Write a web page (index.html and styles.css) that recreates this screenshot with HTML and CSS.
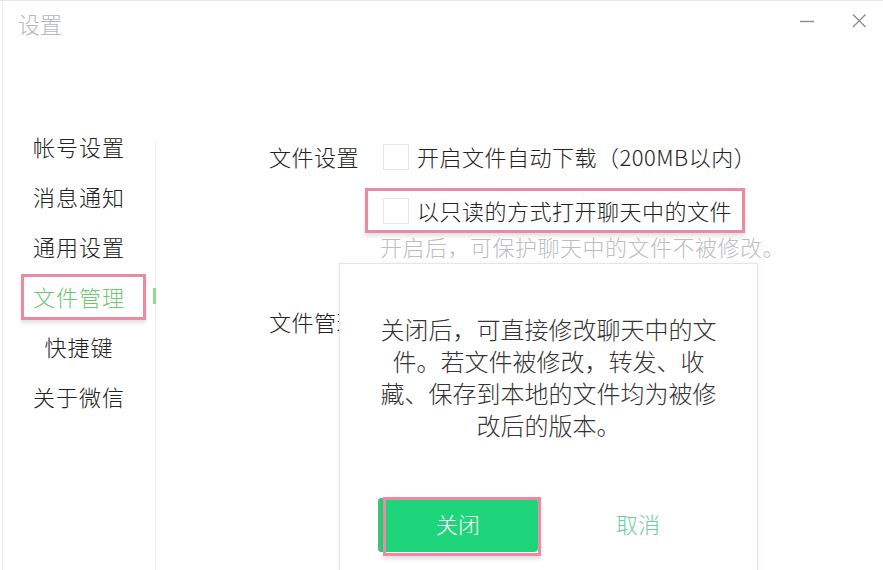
FILE: index.html
```html
<!DOCTYPE html>
<html lang="zh-CN">
<head>
    <meta charset="UTF-8">
    <meta name="viewport" content="width=device-width, initial-scale=1.0">
    <title>设置</title>
    <link rel="stylesheet" href="styles.css">
</head>
<body>

    <div class="window">

        <!-- Title bar -->
        <header class="titlebar">
            <span class="title">设置</span>
            <div class="controls">
                <button class="ctrl" title="最小化">
                    <svg width="16" height="16" viewBox="0 0 16 16"><path d="M1 8.5H15" stroke="#8c8c98" stroke-width="1.4"/></svg>
                </button>
                <button class="ctrl" title="关闭">
                    <svg width="16" height="16" viewBox="0 0 16 16"><path d="M2 1.5L14.5 14M14.5 1.5L2 14" stroke="#8c8c98" stroke-width="1.4"/></svg>
                </button>
            </div>
        </header>

        <div class="body">

            <!-- Side menu -->
            <nav class="nav">
                <div class="nav-item">帐号设置</div>
                <div class="nav-item">消息通知</div>
                <div class="nav-item">通用设置</div>
                <div class="nav-item active">文件管理</div>
                <div class="nav-item">快捷键</div>
                <div class="nav-item">关于微信</div>
            </nav>

            <div class="divider"></div>

            <!-- File settings -->
            <main class="main">
                <div class="row">
                    <span class="label">文件设置</span>
                    <label class="check"><span class="box"></span>开启文件自动下载（200MB以内）</label>
                </div>
                <div class="row">
                    <span class="label"></span>
                    <label class="check marked"><span class="box"></span>以只读的方式打开聊天中的文件</label>
                </div>
                <p class="hint">开启后，可保护聊天中的文件不被修改。</p>
                <div class="row row-manage">
                    <span class="label">文件管理</span>
                </div>
            </main>

            <!-- Confirm dialog -->
            <div class="dialog">
                <p class="dialog-text">关闭后，可直接修改聊天中的文件。若文件被修改，转发、收藏、保存到本地的文件均为被修改后的版本。</p>
                <div class="dialog-actions">
                    <button class="btn btn-primary marked">关闭</button>
                    <button class="btn btn-text">取消</button>
                </div>
            </div>

        </div>
    </div>

</body>
</html>
```

FILE: styles.css
```css
body {
    margin: 0;
    font-family: "Noto Sans CJK SC", "Noto Sans", sans-serif;
    font-weight: 300;
    color: #222;
    background: #fff;
}
.window {
    width: 883px;
    height: 570px;
    overflow: hidden;
    box-sizing: border-box;
    border-top: 1px solid #e6e6ee;
    box-shadow: inset 2px 0 0 #fff, inset 3px 0 0 #efeff3;
}

/* title bar */
.titlebar {
    height: 49px;
    display: flex;
    align-items: center;
    justify-content: space-between;
    padding: 0 16px 0 18px;
}
.title {
    margin-bottom: 6px;
    font-size: 22px;
    color: #b6b6be;
}
.controls {
    align-self: flex-start;
    margin-top: 12px;
    display: flex;
    gap: 36px;
}
.ctrl {
    border: none;
    background: none;
    padding: 0;
    width: 16px;
    height: 16px;
    cursor: pointer;
}
.ctrl svg {
    display: block;
}

/* layout */
.body {
    position: relative;
    display: flex;
    height: 520px;
    padding-top: 71px;
    box-sizing: border-box;
}
.nav {
    width: 155px;
    flex-shrink: 0;
}
.nav-item {
    position: relative;
    height: 50px;
    line-height: 50px;
    padding-left: 3px;
    text-align: center;
    font-size: 22px;
    letter-spacing: 1px;
    color: #222;
    cursor: pointer;
}
.nav-item.active {
    color: #6cc873;
}
.nav-item.active::before {
    content: "";
    position: absolute;
    left: 153px;
    top: 17px;
    width: 3px;
    height: 16px;
    background: #8fdc92;
}
.nav-item.active::after {
    content: "";
    position: absolute;
    left: 21px;
    top: 3px;
    width: 125px;
    height: 46px;
    box-sizing: border-box;
    border: 3px solid #ec8aa4;
    box-shadow: 0 3px 4px rgba(0, 0, 0, 0.12);
}
.divider {
    width: 1px;
    margin-top: 19px;
    background: #f0f0f2;
}

/* settings */
.main {
    flex: 1;
    padding: 10px 0 0 113px;
}
.row {
    display: flex;
    align-items: center;
    height: 50px;
    font-size: 22px;
    letter-spacing: 0.5px;
}
.label {
    width: 114px;
    flex-shrink: 0;
}
.check {
    display: flex;
    align-items: center;
    height: 45px;
}
.box {
    width: 26px;
    height: 26px;
    box-sizing: border-box;
    border: 1px solid #e6e6e6;
    margin: 2px 8px 0 0;
}
.check.marked {
    position: relative;
    margin-left: -18px;
    padding: 0 13px 0 18px;
    margin-top: 8px;
}
.hint {
    margin: 0 0 0 111px;
    line-height: 30px;
    font-size: 22px;
    letter-spacing: 0.5px;
    color: #bdbdc2;
}
.row-manage {
    margin-top: 35px;
}

/* highlight frame */
.marked::after {
    content: "";
    position: absolute;
    inset: 0;
    border: 3px solid #ec8aa4;
    box-shadow: 0 3px 4px rgba(0, 0, 0, 0.12);
}

/* dialog */
.dialog {
    position: absolute;
    left: 339px;
    top: 213px;
    width: 419px;
    height: 330px;
    box-sizing: border-box;
    background: #fff;
    border: 1px solid #e4e4ec;
    box-shadow: 0 0 6px rgba(0, 0, 0, 0.05);
    padding-top: 49px;
}
.dialog-text {
    width: 340px;
    margin: 0 auto;
    font-size: 24px;
    line-height: 32px;
    text-align: center;
    color: #333;
}
.dialog-actions {
    display: flex;
    gap: 20px;
    margin: 57px 0 0 38px;
}
.btn {
    width: 160px;
    height: 54px;
    padding: 0 0 5px;
    border: none;
    font-family: inherit;
    font-weight: 300;
    font-size: 22px;
    cursor: pointer;
}
.btn-primary {
    position: relative;
    background: #1fd57c;
    color: #fff;
    border-radius: 4px;
    box-shadow: inset 2px 0 0 #45c079;
}
.btn-primary.marked::after {
    inset: -1px -3px -4px 5px;
}
.btn-text {
    background: none;
    color: #6dcf9d;
}
```
